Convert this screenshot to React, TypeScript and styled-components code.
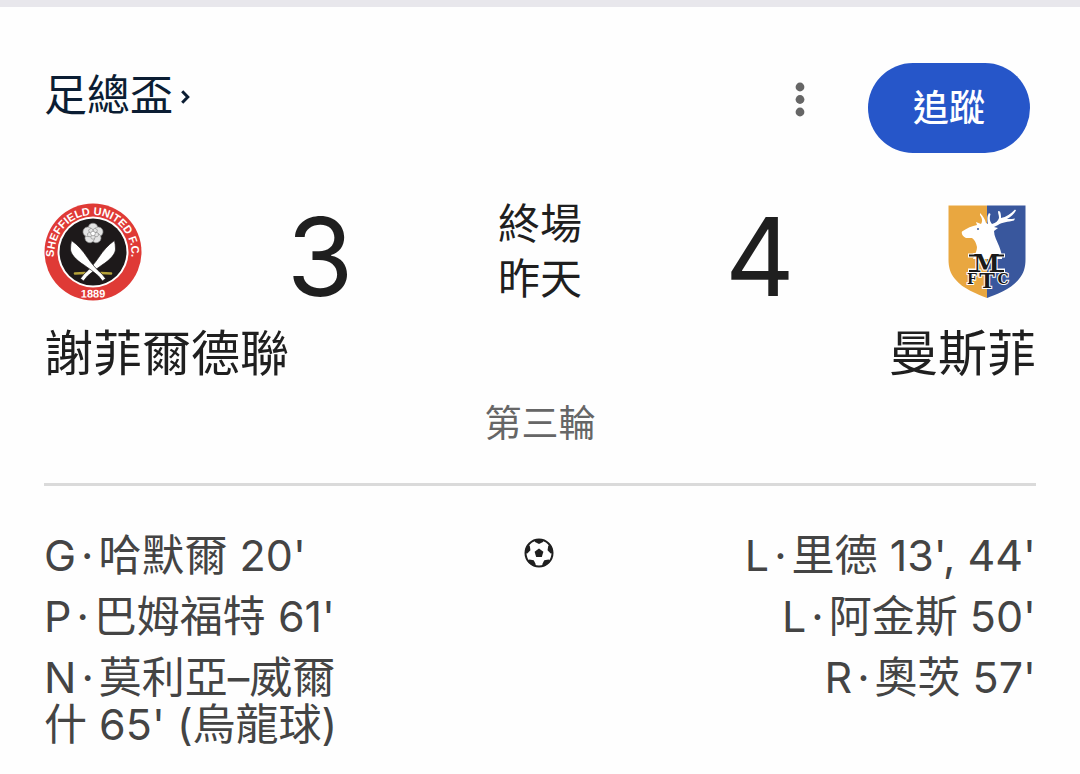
import React from 'react';
import styled, { createGlobalStyle } from 'styled-components';

const GlobalStyle = createGlobalStyle`
  * { box-sizing: border-box; }
  body {
    margin: 0;
    background: #fefefe;
    color: #1f1f1f;
    font-family: Inter, "Noto Sans CJK TC", sans-serif;
  }
`;

const Page = styled.main`
  border-top: 7px solid #e8e7ec;
  padding: 56px 44px 24px;
`;

const Header = styled.header`
  display: flex;
  align-items: flex-start;
  padding-right: 6px;
`;

const LeagueLink = styled.a`
  display: flex;
  align-items: center;
  gap: 8px;
  margin-right: auto;
  color: #0b1d33;
  font-size: 43px;
  line-height: 64px;
  text-decoration: none;

  svg {
    margin-top: 4px;
  }
`;

const MenuButton = styled.button`
  display: flex;
  align-items: center;
  justify-content: center;
  width: 48px;
  height: 74px;
  margin-right: 44px;
  padding: 0;
  border: 0;
  background: none;
  color: #666;
`;

const FollowButton = styled.button`
  width: 162px;
  height: 90px;
  padding: 0;
  border: 0;
  border-radius: 45px;
  background: #2656c9;
  color: #fff;
  font: 500 36px/48px Inter, "Noto Sans CJK TC", sans-serif;
`;

const ScoreRow = styled.section`
  display: flex;
  align-items: center;
  justify-content: space-between;
  margin-top: 43px;
`;

const CrestBox = styled.div`
  display: flex;
  justify-content: center;
  width: 98px;
`;

const Score = styled.span`
  display: flex;
  justify-content: center;
  width: 60px;
  padding-top: 10px;
  font-size: 108px;
  line-height: 100px;
`;

const Status = styled.div`
  width: 84px;
  padding-bottom: 2px;
  font-size: 42px;
  line-height: 55px;
  text-align: center;
  white-space: nowrap;
`;

const NameRow = styled.div`
  display: flex;
  justify-content: space-between;
  margin-top: 14px;
  font-size: 49px;
  line-height: 64px;
`;

const Round = styled.p`
  margin: 0;
  padding: 14px 0 35px;
  border-bottom: 3px solid #dadada;
  color: #666;
  font-size: 37px;
  line-height: 48px;
  text-align: center;
`;

const Goals = styled.section`
  display: grid;
  grid-template-columns: 1fr 32px 1fr;
  margin-top: 46px;
  color: #444;
  font-size: 43px;
  line-height: 47px;
`;

const ScorerList = styled.ul<{ $end?: boolean }>`
  display: flex;
  flex-direction: column;
  gap: 14px;
  width: 300px;
  margin: 0;
  padding: 0;
  list-style: none;
  justify-self: ${(p) => (p.$end ? 'end' : 'start')};
  text-align: ${(p) => (p.$end ? 'right' : 'left')};
`;

const Dot = styled.span`
  padding: 0 5px;
`;

const BallBox = styled.div`
  display: flex;
  height: 42px;
  align-items: center;
`;

function SheffieldCrest() {
  return (
    <svg width="98" height="98" viewBox="0 0 98 98" role="img" aria-label="謝菲爾德聯">
      <defs>
        <path id="ringTop" d="M14.500 67.500A38.500 38.500 0 1 1 83.500 67.500" />
        <path id="ringBottom" d="M20 94Q49 95 78 94" />
      </defs>
      <circle cx="49" cy="49" r="48.500" fill="#df3a36" />
      <circle cx="49" cy="49" r="35.500" fill="#fff" />
      <circle cx="49" cy="49" r="33.500" fill="#1d191a" />
      <g fill="#fff" fontFamily="Liberation Sans, sans-serif" fontWeight="700">
        <text fontSize="11" textAnchor="middle">
          <textPath href="#ringTop" startOffset="50%">SHEFFIELD UNITED F.C.</textPath>
        </text>
        <text fontSize="11" textAnchor="middle">
          <textPath href="#ringBottom" startOffset="50%">1889</textPath>
        </text>
      </g>
      <g fill="#e4e4e4" stroke="#888" strokeWidth=".6">
        {[0, 72, 144, 216, 288].map((a) => (
          <circle key={a} cx="49" cy="25" r="4.800" transform={`rotate(${a} 49 30.500)`} />
        ))}
        {[36, 108, 180, 252, 324].map((a) => (
          <circle key={a} cx="49" cy="27" r="2.200" transform={`rotate(${a} 49 30.500)`} />
        ))}
        <circle cx="49" cy="30.500" r="2.300" fill="#fff" />
      </g>
      <path d="M31 70.500L41 70M57 70L67 70.500" stroke="#b5a23a" strokeWidth="2.600" strokeLinecap="round" />
      <g fill="#fff" stroke="#1d191a" strokeWidth=".7">
        <path d="M70.500 37.500C64 42 59 48 55 54C50.500 60.500 46 66 40 71L36.500 75.500L39.500 78L43.500 73C48 69 53 65.500 58 62C66 57 71.500 51 71.500 46C71.500 43 71 40 70.500 37.500Z" />
        <path d="M27.500 37.500C34 42 39 48 43 54C47.500 60.500 52 66 58 71L61.500 75.500L58.500 78L54.500 73C50 69 45 65.500 40 62C32 57 26.500 51 26.500 46C26.500 43 27 40 27.500 37.500Z" />
      </g>
    </svg>
  );
}

function MansfieldCrest() {
  return (
    <svg width="78" height="94" viewBox="0 0 78 94" role="img" aria-label="曼斯菲">
      <path d="M0.500 0.500H39V93C29 89 15 84 7 74C2 68 0.500 62 0.500 54Z" fill="#e9a740" />
      <path d="M39 0.500H77.500V54C77.500 62 76 68 71 74C63 84 49 89 39 93Z" fill="#39579d" />
      <path
        d="M14 26.500C19 23 24 21 29 20L28 17L33 19C35 16 34 13 32 10L32 8C35 11 37 14 38 18L40 19C39 15 39 11 41 8L42.500 9C41 14 42 17 44 19C48 18 50 16 51 13C51 10 50 9 50 6L52 6.500C53 9 53 11 53 13C58 12 63 9 67 4.500L68 5.500C66 9 63 12 59 14L64 14L67 13.500L66 15.500C60 17 54 17 50 20L46 22L50 23L46 26C46 31 49 36 51 41C53 46 54 50 54 54H25C27 49 29 46 29 42C28 38 27 35 24 33L18 33C15 32 13 29 14 26.500Z"
        fill="#fff"
      />
      <circle cx="30" cy="24" r="1" fill="#39579d" />
      <path d="M20 50.500H30M48 50.500H57M20 65.500H30M48 65.500H57" stroke="#fff" strokeWidth="4" />
      <g fontFamily="DejaVu Serif, serif" fontWeight="700" textAnchor="middle" fill="#1a1a1a" stroke="#fff" strokeWidth="2" paintOrder="stroke">
        <text x="38.500" y="67" fontSize="24">M</text>
        <text x="24" y="79" fontSize="14">F</text>
        <text x="55" y="79" fontSize="14">C</text>
        <text x="39" y="83" fontSize="21">T</text>
      </g>
      <path d="M21 50.500H29M48 50.500H56M21 66H29M48 66H56" stroke="#1a1a1a" strokeWidth="2" />
    </svg>
  );
}

function Ball() {
  return (
    <svg width="30" height="30" viewBox="0 0 30 30" aria-label="進球" role="img">
      <defs>
        <clipPath id="ballEdge"><circle cx="15" cy="15" r="14" /></clipPath>
      </defs>
      <circle cx="15" cy="15" r="13.500" fill="#fff" stroke="#1f1f1f" strokeWidth="2" />
      <path d="M15 10.500L19.400 13.700L17.800 18.900H12.200L10.600 13.700Z" fill="#1f1f1f" />
      <g clipPath="url(#ballEdge)" fill="#1f1f1f">
        {[0, 72, 144, 216, 288].map((a) => (
          <path key={a} d="M10.500 0H19.500L19 4L15 6L11 4Z" transform={`rotate(${a} 15 15)`} />
        ))}
      </g>
    </svg>
  );
}

interface Goal {
  initial: string;
  detail: string;
}

const homeGoals: Goal[] = [
  { initial: 'G', detail: "哈默爾 20'" },
  { initial: 'P', detail: "巴姆福特 61'" },
  { initial: 'N', detail: "莫利亞–威爾什 65' (烏龍球)" },
];
const awayGoals: Goal[] = [
  { initial: 'L', detail: "里德 13', 44'" },
  { initial: 'L', detail: "阿金斯 50'" },
  { initial: 'R', detail: "奧茨 57'" },
];

function Scorers({ goals, end }: { goals: Goal[]; end?: boolean }) {
  return (
    <ScorerList $end={end}>
      {goals.map((goal) => (
        <li key={goal.detail}>
          {goal.initial}<Dot>·</Dot>{goal.detail}
        </li>
      ))}
    </ScorerList>
  );
}

export default function App() {
  return (
    <>
      <GlobalStyle />
      <Page lang="zh-Hant">
        <Header>
          <LeagueLink href="#league">
            足總盃
            <svg width="9" height="14" viewBox="0 0 9 14" fill="none" stroke="currentColor" strokeWidth="3" aria-hidden="true">
              <path d="M1.200 1.200L6.800 7L1.200 12.800" />
            </svg>
          </LeagueLink>
          <MenuButton aria-label="更多選項">
            <svg width="10" height="36" viewBox="0 0 10 36" fill="currentColor" aria-hidden="true">
              <circle cx="5" cy="5" r="4.400" />
              <circle cx="5" cy="17.500" r="4.400" />
              <circle cx="5" cy="30" r="4.400" />
            </svg>
          </MenuButton>
          <FollowButton>追蹤</FollowButton>
        </Header>
        <ScoreRow>
          <CrestBox><SheffieldCrest /></CrestBox>
          <Score>3</Score>
          <Status>終場<br />昨天</Status>
          <Score>4</Score>
          <CrestBox><MansfieldCrest /></CrestBox>
        </ScoreRow>
        <NameRow>
          <span>謝菲爾德聯</span>
          <span>曼斯菲</span>
        </NameRow>
        <Round>第三輪</Round>
        <Goals>
          <Scorers goals={homeGoals} />
          <BallBox><Ball /></BallBox>
          <Scorers goals={awayGoals} end />
        </Goals>
      </Page>
    </>
  );
}
